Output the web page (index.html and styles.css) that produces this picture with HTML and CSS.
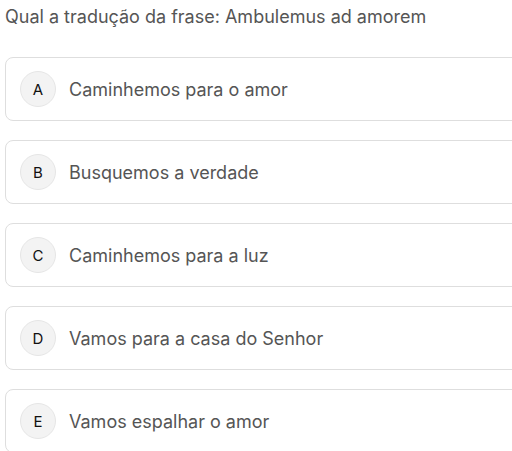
FILE: index.html
```html
<!DOCTYPE html>
<html>
<head>
<meta charset="utf-8">
<link rel="stylesheet" href="styles.css">
</head>
<body>
<div class="quiz">
  <p class="question">Qual a tradução da frase: Ambulemus ad amorem</p>
  <div class="options">
    <div class="option"><span class="letter">A</span><span class="label">Caminhemos para o amor</span></div>
    <div class="option"><span class="letter">B</span><span class="label">Busquemos a verdade</span></div>
    <div class="option"><span class="letter">C</span><span class="label">Caminhemos para a luz</span></div>
    <div class="option"><span class="letter">D</span><span class="label">Vamos para a casa do Senhor</span></div>
    <div class="option"><span class="letter">E</span><span class="label">Vamos espalhar o amor</span></div>
  </div>
</div>
</body>
</html>
```
FILE: styles.css
```css
html, body {
  margin: 0;
  padding: 0;
  background: #fff;
  overflow: hidden;
}
.quiz {
  padding: 4px 0 0 5px;
  font-family: Inter, "Noto Sans", sans-serif;
}
.question {
  margin: 0;
  font-size: 18px;
  line-height: 26px;
  color: #555;
}
.options {
  margin-top: 27px;
  display: flex;
  flex-direction: column;
  gap: 19px;
  width: 530px;
}
.option {
  display: flex;
  align-items: center;
  gap: 13px;
  height: 62px;
  padding: 0 14px;
  border: 1px solid #dedede;
  border-radius: 8px;
}
.letter {
  width: 36px;
  height: 36px;
  flex: none;
  box-sizing: border-box;
  border: 1px solid #e6e6e6;
  border-radius: 50%;
  background: #f3f3f3;
  display: flex;
  align-items: center;
  justify-content: center;
  font-size: 15px;
  font-weight: 400;
  color: #111;
}
.label {
  font-size: 18px;
  color: #555;
}
```
